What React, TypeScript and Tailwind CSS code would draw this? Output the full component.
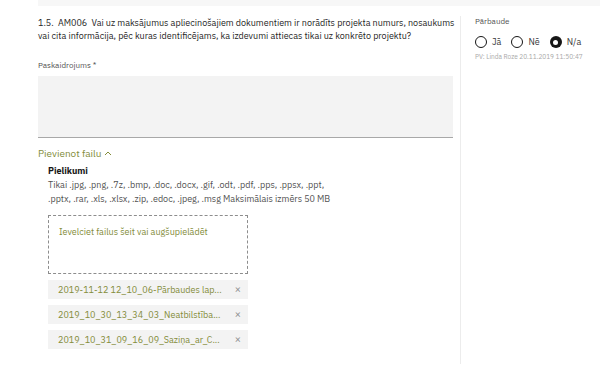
import React from "react";

const olive = "text-[#838c3a]";

function Radio({ label, checked }: { label: string; checked?: boolean }) {
  return (
    <div className="flex items-center gap-[5px]">
      {checked ? (
        <span className="w-[12px] h-[12px] rounded-full bg-[#161616] flex items-center justify-center">
          <span className="w-[5px] h-[5px] rounded-full bg-white" />
        </span>
      ) : (
        <span className="w-[12px] h-[12px] rounded-full border border-[#161616]" />
      )}
      <span className="text-[9px] leading-[12px] text-[#393939]">{label}</span>
    </div>
  );
}

function FileItem({ name }: { name: string }) {
  return (
    <div className="w-[200px] h-[19px] bg-[#f3f3f3] flex items-center justify-between pl-[10px] pr-[7px]">
      <span className={`text-[9px] leading-[12px] ${olive}`}>{name}</span>
      <span className="text-[11px] text-[#8d8d8d] leading-none">×</span>
    </div>
  );
}

export default function App() {
  return (
    <div
      className="w-[600px] h-[374px] bg-white overflow-hidden"
      style={{ fontFamily: '"IBM Plex Sans", "Noto Sans", "Liberation Sans", sans-serif' }}
    >
      <div className="ml-[38px] h-[6px] bg-[#f7f7f7]" />
      <div className="flex mt-[10px]">
        <div className="w-[460px] pl-[38px] pr-[7px]">
          <p className="text-[9px] leading-[13px] text-[#262626] whitespace-pre">
            {"1.5.  AM006  Vai uz maksājumus apliecinošajiem dokumentiem ir norādīts projekta numurs, nosaukums\nvai cita informācija, pēc kuras identificējams, ka izdevumi attiecas tikai uz konkrēto projektu?"}
          </p>
          <div className="mt-[18px] text-[8px] leading-[11px] text-[#525252]">Paskaidrojums *</div>
          <div className="mt-[5px] h-[62px] bg-[#f3f3f3] border-b border-[#a8a8a8]" />
          <div className={`mt-[9px] text-[10px] leading-[13px] ${olive} flex items-center gap-[2px]`}>
            Pievienot failu
            <svg width="8" height="6" viewBox="0 0 8 6" className="mt-[-1px]">
              <path d="M1 5 L4 2 L7 5" fill="none" stroke="#838c3a" strokeWidth="1" />
            </svg>
          </div>
          <div className="pl-[10px]">
            <div className="mt-[4px] text-[9px] leading-[13px] font-bold text-[#161616]">Pielikumi</div>
            <p className="mt-[1px] text-[9px] leading-[14px] text-[#525252]">
              Tikai .jpg, .png, .7z, .bmp, .doc, .docx, .gif, .odt, .pdf, .pps, .ppsx, .ppt,
              <br />
              .pptx, .rar, .xls, .xlsx, .zip, .edoc, .jpeg, .msg Maksimālais izmērs 50 MB
            </p>
            <div className="mt-[9px] w-[200px] h-[59px] border border-dashed border-[#8d8d8d] pl-[10px] pt-[10px]">
              <div className={`text-[9px] leading-[12px] ${olive}`}>Ievelciet failus šeit vai augšupielādēt</div>
            </div>
            <div className="mt-[6px] flex flex-col gap-[6px]">
              <FileItem name="2019-11-12 12_10_06-Pārbaudes lap..." />
              <FileItem name="2019_10_30_13_34_03_Neatbilstība..." />
              <FileItem name="2019_10_31_09_16_09_Saziņa_ar_C..." />
            </div>
          </div>
        </div>
        <div className="flex-1 h-[348px] border-l border-[#ececec] pl-[14px]">
          <div className="text-[8px] leading-[11px] text-[#525252]">Pārbaude</div>
          <div className="mt-[9px] flex items-center gap-[10px]">
            <Radio label="Jā" />
            <Radio label="Nē" />
            <Radio label="N/a" checked />
          </div>
          <div className="mt-[4px] text-[6.5px] leading-[9px] text-[#a8a8a8]">PV: Linda Roze 20.11.2019 11:50:47</div>
        </div>
      </div>
    </div>
  );
}
